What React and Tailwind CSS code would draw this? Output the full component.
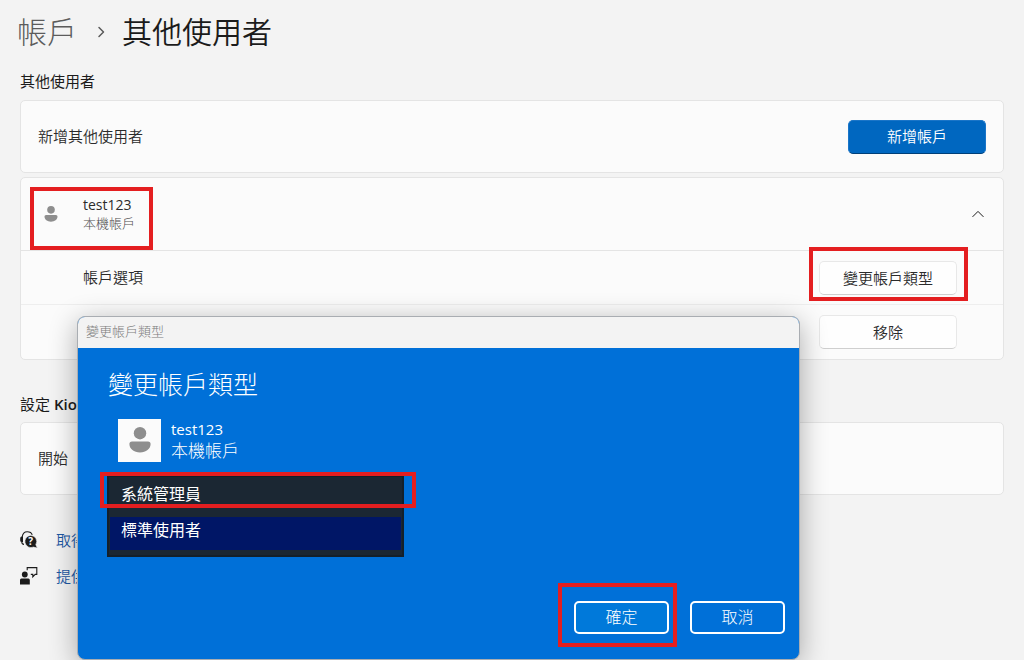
import React, { useState } from "react";

const PersonIcon = ({ className }) => (
  <svg viewBox="0 0 22 26" className={className} fill="currentColor" aria-hidden="true">
    <circle cx="11" cy="6.2" r="6.2" />
    <path d="M3 14.5h16a2.6 2.6 0 0 1 2.6 2.6c0 5-4.6 8.4-10.6 8.4S.4 22.1.4 17.1A2.6 2.6 0 0 1 3 14.5z" />
  </svg>
);

const HelpIcon = () => (
  <svg viewBox="0 0 18 18" className="h-[18px] w-[18px] shrink-0" fill="none" aria-hidden="true">
    <path d="M2.2 6C2.6 2.8 4.6.8 7.2.8s4.4 1 5 3" stroke="#1b1b1b" strokeWidth="1.1" />
    <path d="M3 5.6v5.4H1.8A1.6 1.6 0 0 1 .2 9.400V7.200A1.600 1.600 0 0 1 1.800 5.600z" fill="#1b1b1b" />
    <path d="M1.800 11c0 1.400.6 2.200 2.200 2.400" stroke="#1b1b1b" strokeWidth="1.1" />
    <path
      d="M10.600 4.400a6.100 6.100 0 0 1 5.200 9.300l1.600 3.300-4-.9a6.100 6.100 0 1 1-2.800-11.700z"
      fill="#1b1b1b"
      stroke="#f3f3f3"
      strokeWidth=".6"
    />
    <text x="10.600" y="14" textAnchor="middle" fontSize="10" fontWeight="700" fill="#fff" fontFamily="Open Sans, sans-serif">
      ?
    </text>
  </svg>
);

const FeedbackIcon = () => (
  <svg viewBox="0 0 18 18" className="h-[18px] w-[18px] shrink-0" fill="none" aria-hidden="true">
    <path d="M7.200 3.200V.6h9.600v6.800h-1.600l-2.400 2.400V7.400h-2" stroke="#1b1b1b" strokeWidth="1.1" />
    <circle cx="4.800" cy="7.500" r="2.900" fill="#1b1b1b" />
    <path d="M1.400 11.400h6.900A1.500 1.500 0 0 1 9.800 12.900V17.400H0v-4.500a1.500 1.500 0 0 1 1.400-1.500z" fill="#1b1b1b" />
  </svg>
);

const ChevronIcon = ({ d, className }) => (
  <svg viewBox="0 0 12 12" className={className} fill="none" stroke="currentColor" aria-hidden="true">
    <path d={d} strokeLinecap="round" strokeLinejoin="round" />
  </svg>
);

// Red frame drawn over the thing it points out
const Highlight = ({ className }) => (
  <span
    aria-hidden="true"
    className={`pointer-events-none absolute z-10 border-4 border-[#e41e20] ${className}`}
  />
);

const Card = ({ className = "", children }) => (
  <div className={`rounded-[5px] border border-[#e4e4e4] bg-[#fbfbfb] ${className}`}>
    {children}
  </div>
);

const LightButton = ({ children }) => (
  <button
    type="button"
    className="h-[34px] w-[138px] rounded-[5px] border border-[#e8e8e8] border-b-[#cfcfcf] bg-[#fefefe] hover:bg-gray-50"
  >
    {children}
  </button>
);

const DialogButton = ({ className = "", onClick, children }) => (
  <button
    type="button"
    onClick={onClick}
    className={`h-[33px] w-[95px] rounded-[5px] border-2 border-white pb-[2px] text-base font-light leading-none ${className}`}
  >
    {children}
  </button>
);

const AccountTypeDialog = ({ onClose }) => {
  const [accountType, setAccountType] = useState("standard");

  return (
    <div
      role="dialog"
      aria-label="變更帳戶類型"
      className="absolute left-[77px] top-[316px] w-[723px] overflow-hidden rounded-lg border border-[#a9adb2] bg-[#0070d8] text-white shadow-[0_6px_28px_rgba(0,0,0,0.32)]"
    >
      <div className="flex h-[31px] items-center bg-[#f3f3f3] px-2 pb-[2px] text-[13px] font-light leading-none text-[#7c7c7c]">
        變更帳戶類型
      </div>

      <div className="pb-[25px] pl-[29px] pr-[14px] pt-5">
        <h2 className="pl-px text-[25px] font-light leading-8">
          <label htmlFor="account-type">變更帳戶類型</label>
        </h2>

        <div className="mt-[18px] flex items-center gap-[10px] pl-[11px]">
          <div className="flex h-[43px] w-[43px] items-center justify-center bg-[#fbfbfb] text-[#8e8e8e]">
            <PersonIcon className="h-[26px] w-[22px]" />
          </div>
          <div>
            <p className="text-[15px] font-normal leading-[22px]">test123</p>
            <p className="text-[17px] font-light leading-[22px]">本機帳戶</p>
          </div>
        </div>

        <div className="relative mt-[13px] w-[297px]">
          <select
            id="account-type"
            size={2}
            value={accountType}
            onChange={(e) => setAccountType(e.target.value)}
            className="block h-[82px] w-full appearance-none overflow-hidden border-2 border-[#14202b] bg-[#1b2733] px-px pb-[5px] pt-1 text-base font-light outline-none"
          >
            <option
              value="admin"
              className="h-[33px] px-[11px] py-0 leading-8 [-webkit-text-fill-color:white] checked:bg-linear-to-r checked:from-[#001666] checked:to-[#001666]"
            >
              系統管理員
            </option>
            <option
              value="standard"
              className="mt-[3px] h-[33px] px-[11px] py-0 leading-8 [-webkit-text-fill-color:white] checked:bg-linear-to-r checked:from-[#001666] checked:to-[#001666]"
            >
              標準使用者
            </option>
          </select>
          <Highlight className="-left-[7px] -right-3 -top-[3px] h-9" />
        </div>

        <div className="mt-11 flex justify-end gap-[21px]">
          <div className="relative">
            <DialogButton className="bg-[#0079da]" onClick={onClose}>
              確定
            </DialogButton>
            <Highlight className="-bottom-[13px] -left-4 -right-2 -top-[18px]" />
          </div>
          <DialogButton onClick={onClose}>取消</DialogButton>
        </div>
      </div>
    </div>
  );
};

const App = () => {
  const [dialogOpen, setDialogOpen] = useState(true);

  return (
    <div className="relative min-h-screen overflow-hidden bg-[#f3f3f3] font-['Open_Sans','Noto_Sans_CJK_TC',sans-serif] text-[15px] font-[350] leading-5 text-[#2b2b2b]">
      <main className="px-5 pt-3">
        {/* Breadcrumb */}
        <h1 className="-ml-[3px] flex h-10 items-center text-[30px] leading-10">
          <a href="#accounts" className="font-light text-[#5c5c5c]">
            帳戶
          </a>
          <ChevronIcon d="M4 1.5 8.5 6 4 10.5" className="ml-[18px] mr-[15px] h-3 w-3 stroke-[1.5] text-[#5a5a5a]" />
          <span className="text-[#1b1b1b]">其他使用者</span>
        </h1>

        <section>
          <h2 className="mt-[19px] font-normal text-[#1b1b1b]">其他使用者</h2>

          <Card className="mt-[9px] flex h-[73px] items-center justify-between px-[17px]">
            <span className="pb-[2px]">新增其他使用者</span>
            <button
              type="button"
              className="h-[34px] w-[138px] rounded-[5px] border border-[#1a75c8] border-b-[#003f78] bg-[#0067c0] pb-[2px] text-white hover:bg-[#1975c5]"
            >
              新增帳戶
            </button>
          </Card>

          <Card className="mt-1">
            <div className="flex h-[72px] items-center justify-between pl-[10px] pr-[19px]">
              <div className="relative flex items-center gap-[25px] py-3 pl-[13px] pr-5">
                <PersonIcon className="h-4 w-[14px] text-[#8e8e8e]" />
                <div>
                  <p className="text-sm font-normal leading-[18px]">test123</p>
                  <p className="text-[13px] font-light leading-[18px] text-[#4f4f4f]">本機帳戶</p>
                </div>
                <Highlight className="-bottom-[6px] -left-px right-[2px] top-[3px]" />
              </div>
              <button type="button" aria-label="收合">
                <ChevronIcon d="M.8 8.6 6 3.4 11.2 8.6" className="h-3 w-3 text-[#1b1b1b]" />
              </button>
            </div>

            <div className="flex h-[54px] items-center justify-between border-t border-[#e4e4e4] pl-[62px] pr-[46px]">
              <span className="pb-[2px]">帳戶選項</span>
              <div className="relative">
                <LightButton>變更帳戶類型</LightButton>
                <Highlight className="-bottom-[6px] -left-[10px] -right-[11px] -top-[14px]" />
              </div>
            </div>

            <div className="flex h-[55px] items-center justify-end border-t border-[#eeeeee] pr-[46px]">
              <LightButton>移除</LightButton>
            </div>
          </Card>
        </section>

        <section>
          <h2 className="mt-[34px] font-normal text-[#1b1b1b]">
            設定 <span className="font-semibold">Kiosk</span>
          </h2>
          <Card className="mt-2 flex h-[73px] items-center px-[17px]">
            <span className="pb-[2px]">開始</span>
          </Card>
        </section>

        <nav className="mt-[35px] flex flex-col gap-4">
          <a href="#help" className="flex items-center gap-[18px] text-[#1d58a3]">
            <HelpIcon />
            取得協助
          </a>
          <a href="#feedback" className="flex items-center gap-[18px] text-[#1d58a3]">
            <FeedbackIcon />
            提供意見反應
          </a>
        </nav>
      </main>

      {dialogOpen && <AccountTypeDialog onClose={() => setDialogOpen(false)} />}
    </div>
  );
};

export default App;
